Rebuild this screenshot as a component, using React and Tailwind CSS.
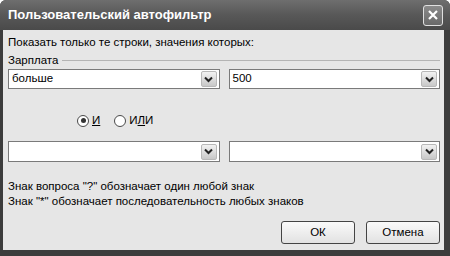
import React, { useState } from 'react';

const font = { fontFamily: '"Liberation Sans", Arial, sans-serif' };

const Chevron = () => (
  <svg width="9" height="7" viewBox="0 0 9 7">
    <path d="M1 1.5 L4.5 5 L8 1.5" fill="none" stroke="#222" strokeWidth="2" />
  </svg>
);

const Combo = ({ value, tall }) => (
  <div className={`flex items-center ${tall ? 'h-[21px]' : 'h-[20px]'} flex-1 bg-white border border-[#7a7a7a] pl-[3px] pr-[2px]`}>
    <span className="flex-1 text-[11.5px] text-black leading-none">{value}</span>
    <div className="w-[16px] h-[16px] flex items-center justify-center rounded-[2px] border border-[#b8b8b8] bg-gradient-to-b from-[#f2f2f2] to-[#c8c8c8]">
      <Chevron />
    </div>
  </div>
);

const Radio = ({ checked, label, onClick }) => (
  <label className="flex items-center gap-[3px] cursor-pointer" onClick={onClick}>
    <span className="w-[12px] h-[12px] rounded-full border border-[#4a4a4a] bg-white flex items-center justify-center">
      {checked && <span className="w-[5px] h-[5px] rounded-full bg-[#333]" />}
    </span>
    <span className="text-[11.5px] text-black">{label}</span>
  </label>
);

const Btn = ({ children }) => (
  <button className="w-[74px] h-[23px] rounded-[3px] border border-[#444] bg-gradient-to-b from-[#fafafa] to-[#e2e2e2] text-[11.5px] text-black">
    {children}
  </button>
);

export default function App() {
  const [mode, setMode] = useState('and');

  return (
    <div style={font} className="w-[450px] h-[256px] flex flex-col bg-[#3c3c3c] pl-[3px] pr-[6px] pb-[6px] rounded-t-[6px] overflow-hidden">
      {/* title bar */}
      <div className="h-[30px] flex items-center justify-between -ml-[3px] -mr-[6px] pl-[8px] pr-[7px] bg-gradient-to-b from-[#6e6e6e] via-[#585858] to-[#4a4a4a]">
        <span className="text-white font-bold text-[13px]">Пользовательский автофильтр</span>
        <div className="w-[20px] h-[21px] rounded-[3px] border border-[#e0e0e0] bg-gradient-to-b from-[#8a8a8a] to-[#6a6a6a] flex items-center justify-center">
          <svg width="12" height="12" viewBox="0 0 12 12">
            <path d="M2 2 L10 10 M10 2 L2 10" stroke="white" strokeWidth="2.2" />
          </svg>
        </div>
      </div>

      {/* body */}
      <div className="flex-1 bg-[#e6e6e6] flex flex-col pl-[5px] pr-[4px] pt-[5px] text-black">
        <div className="text-[11.5px] leading-[14px]">Показать только те строки, значения которых:</div>

        <div className="flex items-center gap-[4px] mt-[4px]">
          <span className="text-[11.5px] leading-[14px]">Зарплата</span>
          <div className="flex-1 h-px bg-[#b4b4b4]" />
        </div>

        <div className="flex gap-[9px] mt-[2px]">
          <Combo value="больше" />
          <Combo value="500" />
        </div>

        <div className="flex items-center gap-[14px] mt-[23px] pl-[69px]">
          <Radio checked={mode === 'and'} label={<span className="underline">И</span>} onClick={() => setMode('and')} />
          <Radio checked={mode === 'or'} label={<span>И<span className="underline">Л</span>И</span>} onClick={() => setMode('or')} />
        </div>

        <div className="flex gap-[9px] mt-[12px]">
          <Combo value="" tall />
          <Combo value="" tall />
        </div>

        <div className="text-[11.5px] leading-[15px] mt-[17px]">
          <div>Знак вопроса "?" обозначает один любой знак</div>
          <div>Знак "*" обозначает последовательность любых знаков</div>
        </div>

        <div className="flex justify-end gap-[11px] mt-[12px]">
          <Btn>ОК</Btn>
          <Btn>Отмена</Btn>
        </div>
      </div>
    </div>
  );
}
